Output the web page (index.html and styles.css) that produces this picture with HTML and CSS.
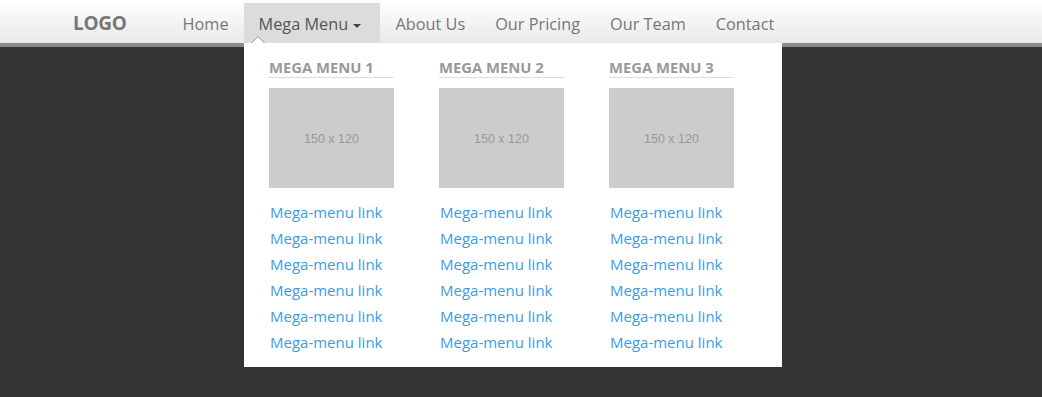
FILE: index.html
```html
<!DOCTYPE html>
<html>
<head>
  <meta charset="UTF-8">
  <title>Mega Menu</title>
  <link rel="stylesheet" href="styles.css">
</head>
<body>

<div class="navbar">
  <a class="brand" href="#">LOGO</a>
  <ul class="nav">
    <li><a href="#">Home</a></li>
    <li class="open"><a href="#">Mega Menu <b class="caret"></b></a></li>
    <li><a href="#">About Us</a></li>
    <li><a href="#">Our Pricing</a></li>
    <li><a href="#">Our Team</a></li>
    <li><a href="#">Contact</a></li>
  </ul>
</div>

<div class="mega">
  <div class="mega-col">
    <h4>Mega Menu 1</h4>
    <div class="thumb">150 x 120</div>
    <ul class="links">
      <li><a href="#">Mega-menu link</a></li>
      <li><a href="#">Mega-menu link</a></li>
      <li><a href="#">Mega-menu link</a></li>
      <li><a href="#">Mega-menu link</a></li>
      <li><a href="#">Mega-menu link</a></li>
      <li><a href="#">Mega-menu link</a></li>
    </ul>
  </div>
  <div class="mega-col">
    <h4>Mega Menu 2</h4>
    <div class="thumb">150 x 120</div>
    <ul class="links">
      <li><a href="#">Mega-menu link</a></li>
      <li><a href="#">Mega-menu link</a></li>
      <li><a href="#">Mega-menu link</a></li>
      <li><a href="#">Mega-menu link</a></li>
      <li><a href="#">Mega-menu link</a></li>
      <li><a href="#">Mega-menu link</a></li>
    </ul>
  </div>
  <div class="mega-col">
    <h4>Mega Menu 3</h4>
    <div class="thumb">150 x 120</div>
    <ul class="links">
      <li><a href="#">Mega-menu link</a></li>
      <li><a href="#">Mega-menu link</a></li>
      <li><a href="#">Mega-menu link</a></li>
      <li><a href="#">Mega-menu link</a></li>
      <li><a href="#">Mega-menu link</a></li>
      <li><a href="#">Mega-menu link</a></li>
    </ul>
  </div>
</div>

</body>
</html>
```

FILE: styles.css
```css
body { margin: 0; background: #333; font-family: "Open Sans", "Noto Sans", sans-serif; }
a { text-decoration: none; }
ul { list-style: none; margin: 0; padding: 0; }

.navbar { display: flex; height: 43px;
  padding-left: 73px;
  background: linear-gradient(#ffffff, #e9e9e9);
  border-bottom: 4px solid #8c8c8c; }
.brand { font-size: 19px; font-weight: bold; color: #777;
  line-height: 47px; margin-right: 41px; letter-spacing: -0.3px; }
.nav { display: flex; }
.nav li { display: flex; }
.nav a { display: block; padding: 0 15px; margin-top: 3px;
  line-height: 42px; font-size: 16.3px; color: #777; }
.nav .open a { background: #dcdcdc; color: #555; padding-right: 19px; }

.caret { display: inline-block; vertical-align: middle; margin-left: 1px;
  border-top: 4px solid #444; border-left: 4px solid transparent;
  border-right: 4px solid transparent; }

/* dropdown panel hangs over the navbar's bottom border */
.mega { position: relative; display: flex; gap: 45px;
  width: 488px; margin: -4px 0 0 244px;
  padding: 15px 25px 12px 25px;
  background: white; }
.mega:before { content: ""; position: absolute; top: -7px; left: 7px;
  border-bottom: 7px solid #8c8c8c; border-left: 7px solid transparent;
  border-right: 7px solid transparent; }
.mega:after { content: ""; position: absolute; top: -6px; left: 8px;
  border-bottom: 6px solid white; border-left: 6px solid transparent;
  border-right: 6px solid transparent; }

.mega-col { width: 125px; }
.mega-col h4 { margin: 0; font-size: 14.8px; line-height: 18px;
  text-transform: uppercase; color: #999; font-weight: bold;
  border-bottom: 1px solid #ddd; padding-bottom: 1px; }
.thumb { height: 100px; margin-top: 10px; padding-top: 2px; box-sizing: border-box;
  background: #ccc;
  display: flex; align-items: center; justify-content: center;
  font-family: "Liberation Sans", Arial, sans-serif; font-size: 12.5px; color: #999; }
.links { margin-top: 11px; }
.links li { font-size: 15px; line-height: 26px; }
.links a { color: #3a9de6; padding-left: 1px; }
```
